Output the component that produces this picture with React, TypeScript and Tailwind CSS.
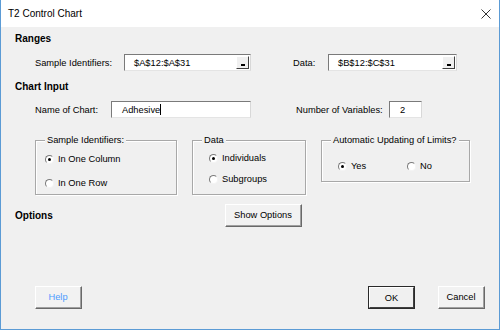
import React from "react";

const font = { fontFamily: '"Liberation Sans", Arial, sans-serif' };

function Radio({ checked }: { checked?: boolean }) {
  return (
    <span className="w-[9px] h-[9px] rounded-full bg-white border border-t-[#7a7a7a] border-l-[#7a7a7a] border-r-[#f4f4f4] border-b-[#f4f4f4] flex items-center justify-center shrink-0">
      {checked ? <span className="w-[3px] h-[3px] rounded-full bg-black" /> : null}
    </span>
  );
}

function RadioItem({ label, checked, className }: { label: string; checked?: boolean; className?: string }) {
  return (
    <div className={"flex items-center h-[12px] gap-[4px] " + (className ?? "")}>
      <Radio checked={checked} />
      <span className="text-[9.3px] leading-[12px] text-black">{label}</span>
    </div>
  );
}

function RangeInput({ value, width }: { value: string; width: string }) {
  return (
    <div
      className={
        "h-[17px] bg-white border border-t-[#7a7a7a] border-l-[#7a7a7a] border-r-[#d8d8d8] border-b-[#e4e4e4] flex items-center justify-between pl-[9px] pr-[1px] " +
        width
      }
    >
      <span className="text-[9.3px] leading-[12px] text-black">{value}</span>
      <span className="w-[13px] h-[13px] bg-[#f0f0f0] border border-t-white border-l-white border-r-[#404040] border-b-[#404040] flex items-end justify-center pb-[2px]">
        <span className="w-[4px] h-[2px] bg-black" />
      </span>
    </div>
  );
}

function TextInput({ value, width, caret, pl }: { value: string; width: string; caret?: boolean; pl: string }) {
  return (
    <div
      className={
        "h-[17px] bg-white border border-t-[#7a7a7a] border-l-[#7a7a7a] border-r-[#d8d8d8] border-b-[#e4e4e4] flex items-center " +
        width +
        " " +
        pl
      }
    >
      <span className="text-[9.3px] leading-[12px] text-black">{value}</span>
      {caret ? <span className="w-[1px] h-[11px] bg-black" /> : null}
    </div>
  );
}

function Group({ legend, className, children }: { legend: string; className: string; children: React.ReactNode }) {
  return (
    <div className={"relative border border-[#a8a8a8] shadow-[inset_1px_1px_0_#ffffff,1px_1px_0_#ffffff] " + className}>
      <span className="absolute top-[-7px] left-[9px] px-[2px] bg-[#f0f0f0] text-[9.3px] leading-[12px] text-black">
        {legend}
      </span>
      {children}
    </div>
  );
}

function Button({ label, def, blue, width }: { label: string; def?: boolean; blue?: boolean; width: string }) {
  if (def) {
    return (
      <div className={"h-[23px] border border-[#2a2a2a] bg-[#f0f0f0] flex " + width}>
        <div className="flex-1 flex items-center justify-center border border-t-white border-l-white border-r-[#404040] border-b-[#404040]">
          <span className="text-[9.3px] leading-[12px] text-black">{label}</span>
        </div>
      </div>
    );
  }
  return (
    <div
      className={
        "h-[23px] bg-[#f2f2f2] border border-t-white border-l-white border-r-[#696969] border-b-[#696969] flex " + width
      }
    >
      <div className="flex-1 flex items-center justify-center border-r border-b border-[#a0a0a0]">
        <span className={"text-[9.3px] leading-[12px] " + (blue ? "text-[#4c9bff]" : "text-black")}>{label}</span>
      </div>
    </div>
  );
}

export default function App() {
  return (
    <div style={font} className="w-[500px] h-[330px] bg-[#f0f0f0] border-x border-b border-[#5b9bd5] flex flex-col overflow-hidden">
      <div className="h-[27px] bg-white flex items-center justify-between pl-[7px] pr-[8px] shrink-0">
        <span className="text-[10px] leading-[14px] text-black">T2 Control Chart</span>
        <svg width="10" height="10" viewBox="0 0 10 10">
          <path d="M0.5 0.5 L9.5 9.5 M9.5 0.5 L0.5 9.5" stroke="#333" strokeWidth="1" fill="none" />
        </svg>
      </div>

      <div className="mt-[5px] h-[14px] pl-[14px] flex items-center">
        <span className="text-[10px] font-bold leading-[14px] text-black">Ranges</span>
      </div>

      <div className="mt-[8px] h-[17px] pl-[34px] flex items-center">
        <span className="w-[89px] text-[9.3px] leading-[12px] text-black">Sample Identifiers:</span>
        <RangeInput value="$A$12:$A$31" width="w-[127px]" />
        <span className="ml-[42px] w-[35px] text-[9.3px] leading-[12px] text-black">Data:</span>
        <RangeInput value="$B$12:$C$31" width="w-[129px]" />
      </div>

      <div className="mt-[9px] h-[14px] pl-[14px] flex items-center">
        <span className="text-[10px] font-bold leading-[14px] text-black">Chart Input</span>
      </div>

      <div className="mt-[7px] h-[17px] pl-[34px] flex items-center">
        <span className="w-[76px] text-[9.3px] leading-[12px] text-black">Name of Chart:</span>
        <TextInput value="Adhesive" width="w-[140px]" caret pl="pl-[10px]" />
        <span className="ml-[45px] w-[93px] text-[9.3px] leading-[12px] text-black">Number of Variables:</span>
        <TextInput value="2" width="w-[33px]" pl="pl-[10px]" />
      </div>

      <div className="mt-[22px] pl-[34px] flex items-start">
        <Group legend="Sample Identifiers:" className="w-[142px] h-[55px] pl-[9px] pt-[12px] flex flex-col gap-[12px]">
          <RadioItem label="In One Column" checked />
          <RadioItem label="In One Row" />
        </Group>
        <Group legend="Data" className="ml-[15px] w-[114px] h-[55px] pl-[16px] pt-[11px] flex flex-col gap-[9px]">
          <RadioItem label="Individuals" checked />
          <RadioItem label="Subgroups" />
        </Group>
        <Group legend="Automatic Updating of Limits?" className="ml-[15px] w-[149px] h-[42px] pl-[16px] pt-[19px] flex items-start">
          <RadioItem label="Yes" checked className="w-[69px]" />
          <RadioItem label="No" />
        </Group>
      </div>

      <div className="mt-[9px] h-[23px] pl-[14px] flex items-center">
        <span className="w-[210px] text-[10px] font-bold leading-[14px] text-black">Options</span>
        <Button label="Show Options" width="w-[77px]" />
      </div>

      <div className="mt-[59px] h-[23px] pl-[34px] flex items-center">
        <Button label="Help" blue width="w-[47px]" />
        <div className="ml-[286px]">
          <Button label="OK" def width="w-[47px]" />
        </div>
        <div className="ml-[23px]">
          <Button label="Cancel" width="w-[47px]" />
        </div>
      </div>
    </div>
  );
}
